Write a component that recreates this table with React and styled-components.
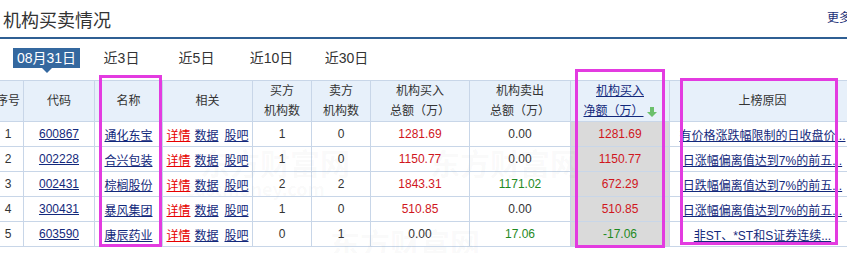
import React from 'react'
import styled, { createGlobalStyle } from 'styled-components'

const GlobalStyle = createGlobalStyle`
  body {
    margin: 0;
    background: #fff;
    font-family: "Liberation Sans", "Noto Sans CJK SC", sans-serif;
  }
`

const Page = styled.div`
  position: relative;
  width: 847px;
  height: 253px;
  overflow: hidden;
  background: #fff;
`

const TitleBar = styled.div`
  display: flex;
  justify-content: space-between;
  align-items: center;
  height: 37px;
  border-bottom: 2px solid #2f5f93;
`

const Title = styled.h2`
  margin: 0;
  padding-left: 3px;
  font-size: 18px;
  font-weight: normal;
  color: #333;
  font-family: "Noto Sans CJK SC", sans-serif;
`

const More = styled.a`
  font-size: 12px;
  color: #1b2f78;
  margin-right: -4px;
  margin-top: -4px;
`

const Tabs = styled.div`
  display: flex;
  padding-left: 9px;
  margin-top: 9px;
  height: 32px;
`

const Tab = styled.div`
  position: relative;
  width: 75px;
  height: 20px;
  display: flex;
  justify-content: center;
  align-items: center;
  font-size: 14px;
  color: #333;
`

const TabLabel = styled.span`
  padding: 0 4px;
  line-height: 20px;
  background: ${p => (p.$active ? '#34689f' : 'transparent')};
  color: ${p => (p.$active ? '#fff' : '#333')};

  &::after {
    content: '';
    display: ${p => (p.$active ? 'block' : 'none')};
    position: absolute;
    left: 50%;
    top: 20px;
    margin-left: -5px;
    border: 5px solid transparent;
    border-top: 5px solid #34689f;
    border-bottom: 0;
  }
`

const Table = styled.table`
  border-collapse: collapse;
  table-layout: fixed;
  margin-left: -8px;
  width: 863px;
  font-size: 12px;
`

const Th = styled.th`
  height: 40px;
  padding: 0;
  background: #e7f0fa;
  border: 1px solid #c8d6e8;
  font-weight: normal;
  color: #333;
  line-height: 20px;
  text-align: center;
`

const Td = styled.td`
  height: 24px;
  padding: 0;
  border: 1px solid #c8d6e8;
  text-align: center;
  white-space: nowrap;
  overflow: visible;
  color: ${p => p.$color || '#333'};
  background: ${p => (p.$shade ? '#dadada' : 'transparent')};
`

const Link = styled.a`
  color: ${p => p.$color || '#13297c'};
  text-decoration: underline;
  cursor: pointer;
`

const Related = styled.span`
  display: inline-flex;
  gap: 4px;
`

const SortArrow = styled.svg`
  vertical-align: -2px;
  margin-left: 3px;
`

const Mark = styled.div`
  position: absolute;
  border: 3px solid #e33be0;
  pointer-events: none;
`

const Watermark = styled.div`
  position: absolute;
  font-family: "Noto Sans CJK SC", sans-serif;
  font-weight: bold;
  color: rgba(120, 120, 120, 0.045);
  white-space: nowrap;
  pointer-events: none;
  font-size: ${p => p.$size}px;
`

const RED = '#d0161d'
const GREEN = '#1f8a1f'

const rows = [
  { no: 1, code: '600867', name: '通化东宝', buyN: 1, sellN: 0, buy: '1281.69', sell: '0.00', net: '1281.69', reason: '有价格涨跌幅限制的日收盘价...' },
  { no: 2, code: '002228', name: '合兴包装', buyN: 1, sellN: 0, buy: '1150.77', sell: '0.00', net: '1150.77', reason: '日涨幅偏离值达到7%的前五...' },
  { no: 3, code: '002431', name: '棕榈股份', buyN: 2, sellN: 2, buy: '1843.31', sell: '1171.02', net: '672.29', reason: '日跌幅偏离值达到7%的前五...' },
  { no: 4, code: '300431', name: '暴风集团', buyN: 1, sellN: 0, buy: '510.85', sell: '0.00', net: '510.85', reason: '日涨幅偏离值达到7%的前五...' },
  { no: 5, code: '603590', name: '康辰药业', buyN: 0, sellN: 1, buy: '0.00', sell: '17.06', net: '-17.06', reason: '非ST、*ST和S证券连续...' },
]

const tabs = ['08月31日', '近3日', '近5日', '近10日', '近30日']

function App() {
  return (
    <Page>
      <GlobalStyle />
      <TitleBar>
        <Title>机构买卖情况</Title>
        <More>更多</More>
      </TitleBar>
      <Tabs>
        {tabs.map((t, i) => (
          <Tab key={t}>
            <TabLabel $active={i === 0}>{t}</TabLabel>
          </Tab>
        ))}
      </Tabs>
      <Table>
        <colgroup>
          <col style={{ width: 31 }} />
          <col style={{ width: 71 }} />
          <col style={{ width: 68 }} />
          <col style={{ width: 90 }} />
          <col style={{ width: 59 }} />
          <col style={{ width: 59 }} />
          <col style={{ width: 99 }} />
          <col style={{ width: 101 }} />
          <col style={{ width: 99 }} />
          <col style={{ width: 186 }} />
        </colgroup>
        <thead>
          <tr>
            <Th>序号</Th>
            <Th>代码</Th>
            <Th>名称</Th>
            <Th>相关</Th>
            <Th>买方<br />机构数</Th>
            <Th>卖方<br />机构数</Th>
            <Th>机构买入<br />总额（万）</Th>
            <Th>机构卖出<br />总额（万）</Th>
            <Th>
              <Link>机构买入</Link><br />
              <Link>净额（万）</Link>
              <SortArrow width="10" height="10" viewBox="0 0 10 10">
                <path d="M3 0h4v5h3L5 10 0 5h3z" fill="#6cc06c" />
              </SortArrow>
            </Th>
            <Th>上榜原因</Th>
          </tr>
        </thead>
        <tbody>
          {rows.map(r => (
            <tr key={r.no}>
              <Td>{r.no}</Td>
              <Td><Link>{r.code}</Link></Td>
              <Td><Link>{r.name}</Link></Td>
              <Td>
                <Related>
                  <Link $color="#e60000">详情</Link>
                  <Link>数据</Link>
                  <Link style={{ marginLeft: 2 }}>股吧</Link>
                </Related>
              </Td>
              <Td>{r.buyN}</Td>
              <Td>{r.sellN}</Td>
              <Td $color={r.buy === '0.00' ? '#333' : RED}>{r.buy}</Td>
              <Td $color={r.sell === '0.00' ? '#333' : GREEN}>{r.sell}</Td>
              <Td $shade $color={r.net.startsWith('-') ? GREEN : RED}>{r.net}</Td>
              <Td><Link>{r.reason}</Link></Td>
            </tr>
          ))}
        </tbody>
      </Table>

      <Watermark $size={30} style={{ left: 200, top: 140 }}>东方财富网</Watermark>
      <Watermark $size={18} style={{ left: 185, top: 175 }}>eastmoney.com</Watermark>
      <Watermark $size={30} style={{ left: 430, top: 140 }}>东方财富网</Watermark>
      <Watermark $size={30} style={{ left: 330, top: 220 }}>东方财富网</Watermark>

      <Mark style={{ left: 99, top: 75, width: 57, height: 166 }} />
      <Mark style={{ left: 575, top: 69, width: 84, height: 173 }} />
      <Mark style={{ left: 680, top: 78, width: 152, height: 161 }} />
    </Page>
  )
}

export default App
